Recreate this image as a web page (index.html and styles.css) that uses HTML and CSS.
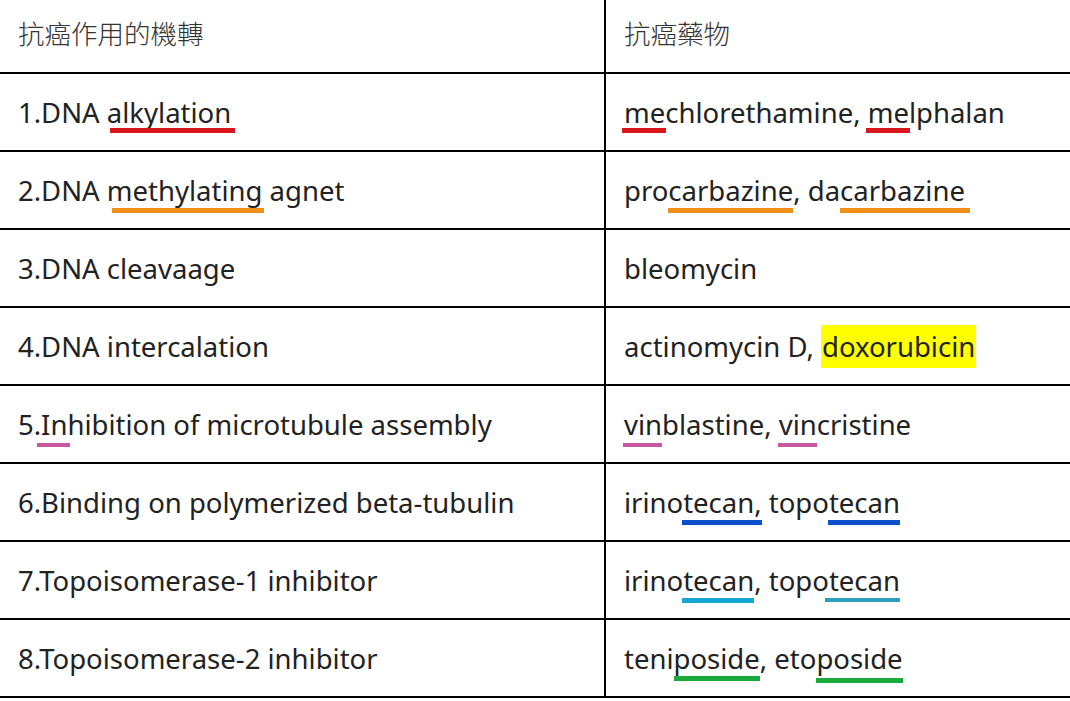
FILE: index.html
```html
<!DOCTYPE html>
<html lang="zh-Hant">
<head>
<meta charset="utf-8">
<title>抗癌作用的機轉</title>
<link rel="stylesheet" href="styles.css">
</head>
<body>
<table class="drug-table">
  <colgroup><col class="c1"><col class="c2"></colgroup>
  <thead>
    <tr class="head">
      <th>抗癌作用的機轉</th>
      <th>抗癌藥物</th>
    </tr>
  </thead>
  <tbody>
    <tr>
      <td>1.DNA <span class="mk red mk-alk">alkylation</span></td>
      <td><span class="mk red mk-me">me</span>chlorethamine, <span class="mk red mk-me">me</span>lphalan</td>
    </tr>
    <tr>
      <td>2.DNA <span class="mk orange mk-meth">methylating</span> agnet</td>
      <td>pro<span class="mk orange mk-carb">carbazine</span>, da<span class="mk orange mk-carb2">carbazine</span></td>
    </tr>
    <tr>
      <td>3.DNA cleavaage</td>
      <td>bleomycin</td>
    </tr>
    <tr>
      <td>4.DNA intercalation</td>
      <td>actinomycin D, <span class="hl">doxorubicin</span></td>
    </tr>
    <tr>
      <td>5.<span class="mk pink mk-in">In</span>hibition of microtubule assembly</td>
      <td><span class="mk pink mk-vin">vin</span>blastine, <span class="mk pink mk-vin">vin</span>cristine</td>
    </tr>
    <tr>
      <td>6.Binding on polymerized beta-tubulin</td>
      <td>irino<span class="mk blue mk-tec">tecan,</span> topo<span class="mk blue mk-tec">tecan</span></td>
    </tr>
    <tr>
      <td>7.Topoisomerase-1 inhibitor</td>
      <td>irino<span class="mk cyan mk-tec">tecan</span>, topo<span class="mk cyan2 mk-tec2">tecan</span></td>
    </tr>
    <tr>
      <td>8.Topoisomerase-2 inhibitor</td>
      <td>teni<span class="mk green mk-pos">poside</span>, eto<span class="mk green mk-pos2">poside</span></td>
    </tr>
  </tbody>
</table>
</body>
</html>
```

FILE: styles.css
```css
html, body {
  margin: 0;
  padding: 0;
  background: #ffffff;
}

body {
  width: 1070px;
  height: 701px;
  overflow: hidden;
  font-family: "Noto Sans", "Open Sans", "Noto Sans CJK TC", sans-serif;
  color: #222222;
}

.drug-table {
  width: 1070px;
  border-collapse: separate;
  border-spacing: 0;
  table-layout: fixed;
}

.c1 { width: 604px; }
.c2 { width: 466px; }

.drug-table th,
.drug-table td {
  padding: 0 0 0 18px;
  text-align: left;
  vertical-align: middle;
  border-bottom: 2px solid #000000;
  white-space: nowrap;
  font-size: 27.5px;
  line-height: 36px;
}

.drug-table th + th,
.drug-table td + td {
  border-left: 2px solid #000000;
  padding-left: 18px;
}

.head th {
  height: 74px;
  font-family: "Noto Sans CJK TC", "Noto Sans", sans-serif;
  font-weight: 300;
  font-size: 26.5px;
  color: #333333;
  padding-bottom: 6px;
  box-sizing: border-box;
}

.drug-table tbody td {
  height: 74px;
  box-sizing: content-box;
  padding-top: 2px;
  padding-bottom: 0;
}

/* hand-drawn underline marks */
.mk {
  position: relative;
}

.mk::after {
  content: "";
  position: absolute;
  left: -1px;
  right: -1px;
  bottom: -2px;
  height: 5px;
}

.red::after { background: #d8161c; }
.orange::after { background: #f0901a; }
.pink::after { background: #c9579f; height: 4px; }
.blue::after { background: #0b4fcc; }
.cyan::after { background: #17a6d2; }
.cyan2::after { background: #2b9fbf; height: 4px; }
.green::after { background: #1aaa3c; }

.mk-alk::after { left: 3px; right: -4px; }
.mk-me::after { left: -2px; right: -1px; }
.mk-meth::after { left: 5px; right: -2px; bottom: -4px; }
.mk-carb::after { left: 0; right: 0; bottom: -4px; }
.mk-carb2::after { left: 0; right: -5px; bottom: -4px; }
.mk-in::after { left: -4px; right: -3px; bottom: -4px; }
.mk-vin::after { left: -1px; right: 0; bottom: -4px; }
.mk-tec::after { left: -1px; right: 0; bottom: -4px; }
.mk-tec2::after { left: -4px; right: 0; bottom: -3px; }
.mk-pos::after { left: 0; right: 0; bottom: -4px; }
.mk-pos2::after { left: 0; right: 0; bottom: -6px; }

.hl {
  background: #ffff00;
  padding: 3px 1px;
}
```
